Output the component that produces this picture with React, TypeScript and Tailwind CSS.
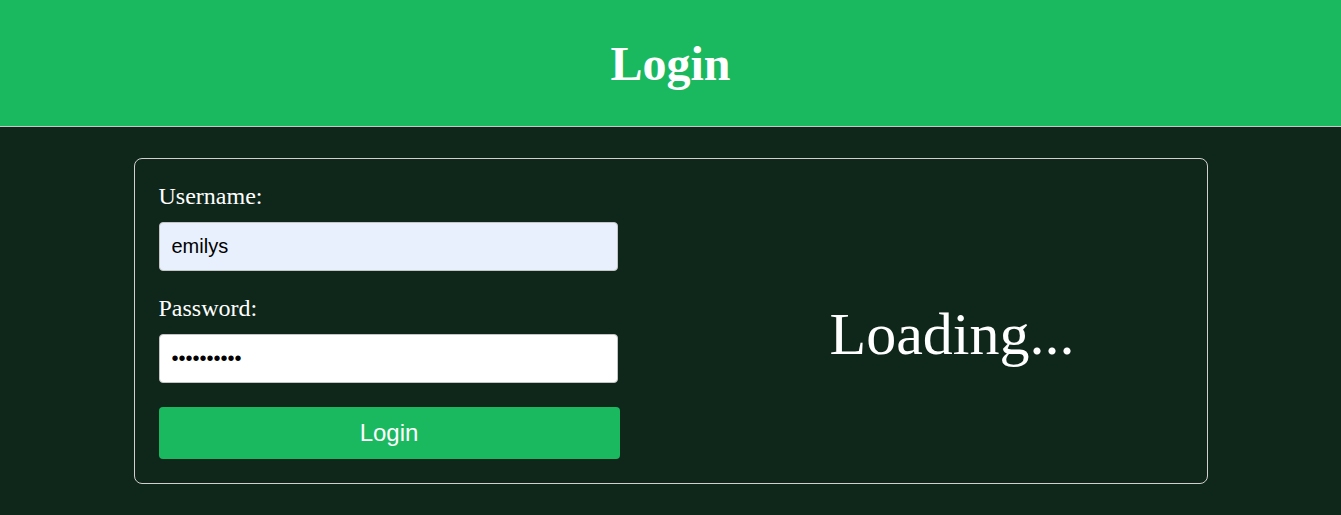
import { useState } from 'react';

const serif = "font-['Liberation_Serif','Times_New_Roman',serif]";
const sans = "font-['Liberation_Sans',Arial,sans-serif]";

export default function App() {
  const [username, setUsername] = useState('emilys');
  const [password, setPassword] = useState('emilyspass');

  return (
    <div className={`min-h-screen bg-[#0f271a] ${serif}`}>
      <header className="flex h-[127px] items-center justify-center border-b border-[#c8c8c8] bg-[#1ab960]">
        <h1 className="text-[48px] font-bold leading-[55px] text-white">Login</h1>
      </header>

      <main className="mx-auto mt-[31px] flex w-[1074px] justify-between rounded-lg border border-[#d0d0d0] p-6">
        <form
          onSubmit={(e) => e.preventDefault()}
          className="flex w-[461px] flex-col"
        >
          <label className="mb-3 block text-[24px] leading-[27px] text-white">
            Username:
          </label>
          <input
            type="text"
            value={username}
            onChange={(e) => setUsername(e.target.value)}
            className={`mb-6 h-[49px] w-[459px] rounded border border-[#c4c4c4] bg-[#e8f0fe] px-3 text-[20px] text-black outline-none ${sans}`}
          />
          <label className="mb-3 block text-[24px] leading-[27px] text-white">
            Password:
          </label>
          <input
            type="password"
            value={password}
            onChange={(e) => setPassword(e.target.value)}
            className={`mb-6 h-[49px] w-[459px] rounded border border-[#c4c4c4] bg-white px-3 text-[20px] text-black outline-none ${sans}`}
          />
          <button
            type="submit"
            className={`h-[52px] w-full rounded bg-[#1ab960] text-[24px] text-white ${sans}`}
          >
            Login
          </button>
        </form>

        <div className="flex w-[461px] items-center justify-center pt-[26px]">
          <p className="text-[60px] text-white">Loading...</p>
        </div>
      </main>
    </div>
  );
}
